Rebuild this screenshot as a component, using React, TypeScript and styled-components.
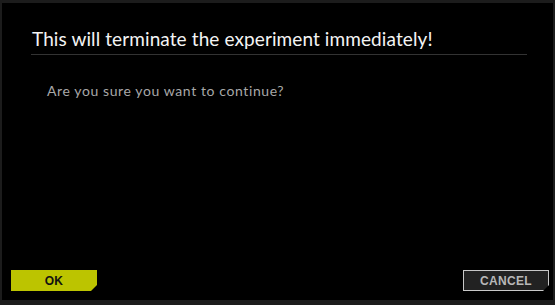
import React from "react";
import styled, { createGlobalStyle } from "styled-components";

const GlobalStyle = createGlobalStyle`
  html, body {
    margin: 0;
    padding: 0;
    background: #1c1c1c;
  }
  body {
    width: 555px;
    height: 305px;
    overflow: hidden;
  }
`;

const Frame = styled.div`
  box-sizing: border-box;
  width: 555px;
  height: 305px;
  padding: 3px 2px 5px 2px;
  background: #1c1c1c;
`;

const Dialog = styled.div`
  box-sizing: border-box;
  height: 100%;
  background: #000;
  display: flex;
  flex-direction: column;
  padding: 24px 26px 9px 9px;
  font-family: "Lato", "Liberation Sans", sans-serif;
`;

const Title = styled.h1`
  margin: 0 0 0 20px;
  padding: 0 0 3px 1px;
  font-size: 19px;
  font-weight: 400;
  line-height: 24px;
  letter-spacing: 0.1px;
  color: #f4f4f4;
  border-bottom: 1px solid #333;
`;

const Message = styled.p`
  margin: 28px 0 0 36px;
  font-size: 14px;
  line-height: 16px;
  letter-spacing: 0.6px;
  color: #a8a8a8;
`;

const Actions = styled.div`
  margin-top: auto;
  display: flex;
  justify-content: space-between;
  align-items: flex-end;
  margin-right: -22px;
`;

const ActionButton = styled.button<{ $primary?: boolean }>`
  box-sizing: border-box;
  width: 86px;
  height: 21px;
  padding: 0;
  border: ${(p) => (p.$primary ? "none" : "1px solid #c8c8c8")};
  background: ${(p) => (p.$primary ? "#bcc400" : "#222")};
  color: ${(p) => (p.$primary ? "#111" : "#b8b8b8")};
  font-family: "Liberation Sans", sans-serif;
  font-weight: 700;
  font-size: 12px;
  letter-spacing: 0.3px;
  clip-path: polygon(0 0, 100% 0, 100% calc(100% - 6px), calc(100% - 6px) 100%, 0 100%);
  cursor: pointer;
`;

export default function App() {
  return (
    <Frame>
      <GlobalStyle />
      <Dialog>
        <Title>This will terminate the experiment immediately!</Title>
        <Message>Are you sure you want to continue?</Message>
        <Actions>
          <ActionButton $primary>OK</ActionButton>
          <ActionButton>CANCEL</ActionButton>
        </Actions>
      </Dialog>
    </Frame>
  );
}
